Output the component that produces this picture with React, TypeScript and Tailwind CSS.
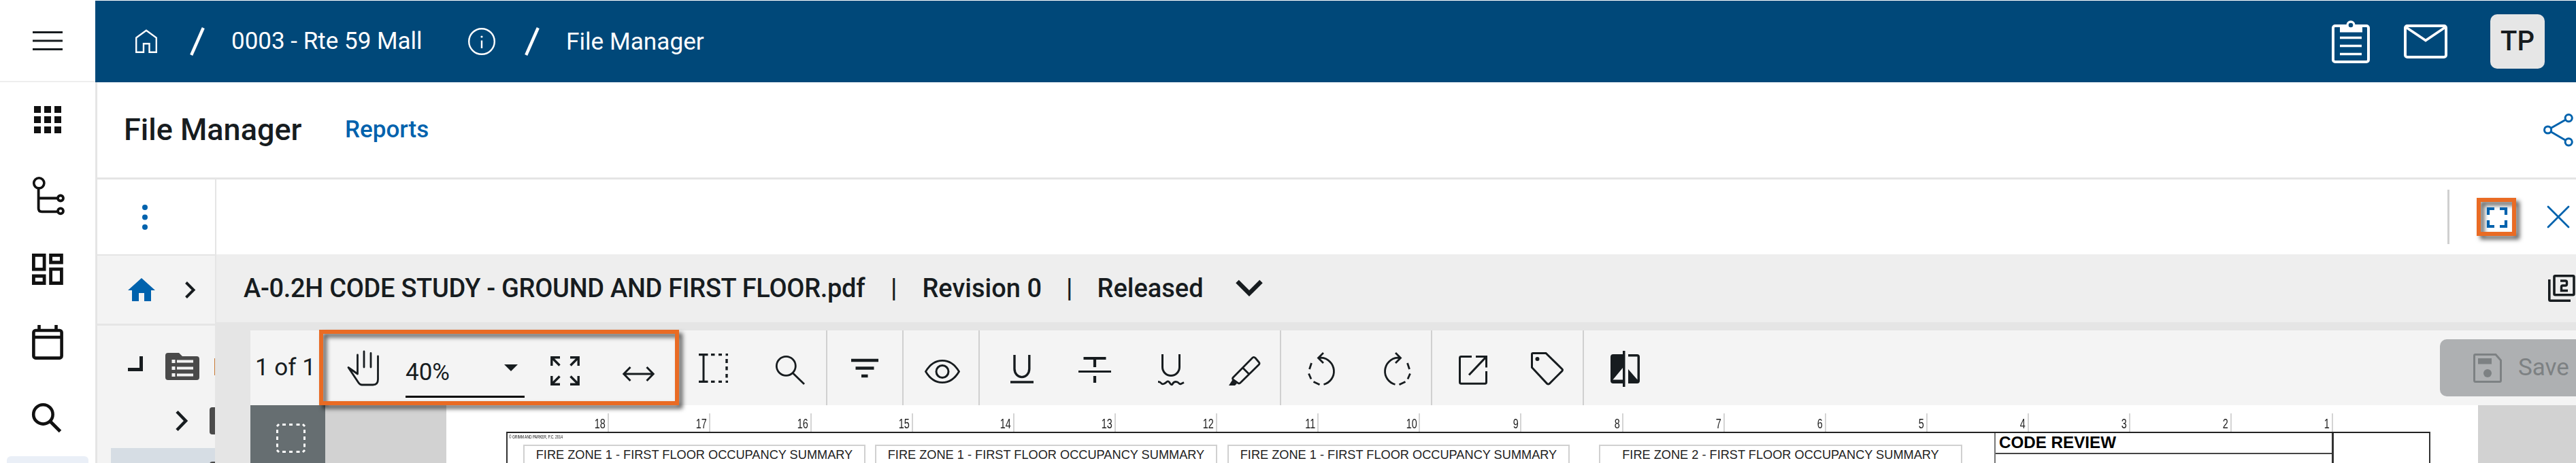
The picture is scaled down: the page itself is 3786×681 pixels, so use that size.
import React from 'react';

interface IconProps {
  w: number;
  h: number;
  className?: string;
  children: React.ReactNode;
}

const Icon: React.FC<IconProps> = ({ w, h, className = '', children }) => (
  <svg
    width={w}
    height={h}
    viewBox={`0 0 ${w} ${h}`}
    fill="none"
    stroke="currentColor"
    className={`shrink-0 overflow-visible ${className}`}
  >
    {children}
  </svg>
);

const rulerMarks = [18, 17, 16, 15, 14, 13, 12, 11, 10, 9, 8, 7, 6, 5, 4, 3, 2, 1];

const zones = [
  { title: 'FIRE ZONE 1 - FIRST FLOOR OCCUPANCY SUMMARY', className: 'ml-[23px] w-[503px]' },
  { title: 'FIRE ZONE 1 - FIRST FLOOR OCCUPANCY SUMMARY', className: 'ml-[14px] w-[503px]' },
  { title: 'FIRE ZONE 1 - FIRST FLOOR OCCUPANCY SUMMARY', className: 'ml-[15px] w-[503px]' },
  { title: 'FIRE ZONE 2 - FIRST FLOOR OCCUPANCY SUMMARY', className: 'ml-[43px] w-[534px]' },
];

const Slash: React.FC<{ className?: string }> = ({ className }) => (
  <Icon w={22} h={40} className={className}>
    <path d="M2.2 40 19.8 0" strokeWidth="4.4" />
  </Icon>
);

const Header: React.FC = () => (
  <header className="mt-px flex h-[120px] flex-1 items-center bg-[#004879] text-[35px] text-white">
    <Icon w={32} h={36} className="ml-[59px]">
      <path d="M1.2 12.5 16 1.7 30.8 12.5V33.8H20.5V21.2H12V33.8H1.2Z" strokeWidth="2.4" />
    </Icon>
    <Slash className="ml-[48px]" />
    <span className="mt-px ml-[39px] w-[279px] whitespace-nowrap">0003 - Rte 59 Mall</span>
    <Icon w={40} h={40} className="ml-[69px]">
      <circle cx="20" cy="20" r="18.8" strokeWidth="2.4" />
      <path d="M20 18.5V30" strokeWidth="2.4" />
      <circle cx="20" cy="13" r="1.6" fill="currentColor" stroke="none" />
    </Icon>
    <Slash className="ml-[43px]" />
    <span className="mt-px ml-[39px] text-[35.2px] whitespace-nowrap">File Manager</span>
    <Icon w={56} h={63} className="mr-[50px] ml-auto">
      <rect x="2" y="8" width="52" height="53" rx="3" strokeWidth="4" />
      <path d="M12 8H21.5A7 7 0 0 1 34.5 8H45V17.5H12Z" fill="currentColor" stroke="none" />
      <circle cx="28" cy="7" r="5" fill="#004879" strokeWidth="3.4" />
      <path d="M12 25.5H44M12 37.5H44M12 49.5H44" strokeWidth="3.6" />
    </Icon>
    <Icon w={64} h={50} className="mr-[63px]">
      <rect x="2" y="2" width="60" height="46" rx="3" strokeWidth="4" />
      <path d="M3 4 32 23.5 61 4" strokeWidth="3.6" />
    </Icon>
    <div className="mr-[46px] flex h-20 w-20 items-center justify-center rounded-[10px] bg-[#e6e6e6] text-[40px] font-medium text-[#171c1f]">
      TP
    </div>
  </header>
);

const Sidebar: React.FC = () => (
  <nav className="flex w-[143px] shrink-0 flex-col items-start border-r-3 border-[#e5e5e5] bg-white text-[#111]">
    <Icon w={40} h={40} className="mt-[35px] ml-[50px]">
      <path
        d="M0 0h10v10H0zM15 0h10v10H15zM30 0h10v10H30zM0 15h10v10H0zM15 15h10v10H15zM30 15h10v10H30zM0 30h10v10H0zM15 30h10v10H15zM30 30h10v10H30z"
        fill="currentColor"
        stroke="none"
      />
    </Icon>
    <Icon w={47} h={56} className="mt-[64px] ml-[48px]">
      <circle cx="9.3" cy="9.3" r="7.6" strokeWidth="3.6" />
      <path d="M8.6 17V46.5Q8.6 51.3 13.4 51.3H36M8.6 31.5H36" strokeWidth="3.8" />
      <circle cx="41" cy="31.5" r="4" strokeWidth="3.8" />
      <circle cx="41" cy="50.3" r="4" strokeWidth="3.8" />
    </Icon>
    <Icon w={46} h={46} className="mt-[57px] ml-[47px]">
      <path d="M2.4 2.4H18.1V23.1H2.4ZM27.6 2.4H43.4V13H27.6ZM27.6 22.8H43.4V43.5H27.6ZM2.4 33H18.1V43.5H2.4Z" strokeWidth="4.8" />
    </Icon>
    <Icon w={46} h={51} className="mt-[59px] ml-[47px]">
      <rect x="2.4" y="8" width="41.2" height="40.6" rx="3" strokeWidth="4.6" />
      <path d="M2.4 18H43.6M10.5 0V7M35.5 0V7" strokeWidth="4.6" />
    </Icon>
    <Icon w={44} h={44} className="mt-[64px] ml-[47px]">
      <circle cx="16.4" cy="16.4" r="14.2" strokeWidth="4.6" />
      <path d="M27 27 41.5 41.5" strokeWidth="5" />
    </Icon>
    <div className="mt-[34px] ml-[10px] h-[40px] w-[120px] shrink-0 rounded-[6px] bg-[#eaeff7]" />
  </nav>
);

const FilesPanel: React.FC = () => (
  <aside className="flex w-[175px] shrink-0 flex-col overflow-hidden border-r-2 border-[#e5e5e5] bg-[#f3f3f3] text-[#171c1f]">
    <div className="flex h-[112px] shrink-0 items-center border-b-2 border-[#e5e5e5] bg-white text-[#0062ad]">
      <Icon w={8} h={37} className="ml-[66px]">
        <circle cx="4" cy="4" r="4" fill="currentColor" stroke="none" />
        <circle cx="4" cy="18.5" r="4" fill="currentColor" stroke="none" />
        <circle cx="4" cy="33" r="4" fill="currentColor" stroke="none" />
      </Icon>
    </div>
    <div className="flex h-[103px] shrink-0 items-center border-b-3 border-[#e5e5e5]">
      <Icon w={40} h={34} className="ml-[45px] text-[#0062ad]">
        <path d="M20 0 40 18H34V34H24V22H16V34H6V18H0Z" fill="currentColor" stroke="none" />
      </Icon>
      <Icon w={15} h={25} className="ml-[44px]">
        <path d="M1.5 1.5 12.5 12.5 1.5 23.5" strokeWidth="4" />
      </Icon>
    </div>
    <div className="flex h-[120px] shrink-0 items-center">
      <Icon w={22} h={22} className="mt-[-8px] ml-[45px]">
        <path d="M19.5 0V19.5H0" strokeWidth="5" />
      </Icon>
      <Icon w={50} h={40} className="ml-[33px] text-[#4a4a4a]">
        <path d="M4 0H20L25 5H46Q50 5 50 9V36Q50 40 46 40H4Q0 40 0 36V4Q0 0 4 0Z" fill="currentColor" stroke="none" />
        <path d="M17 12.5H41M17 22.5H41M17 32.5H41" stroke="#f3f3f3" strokeWidth="4" />
        <path d="M9.5 12.5h5M9.5 22.5h5M9.5 32.5h5" stroke="#f3f3f3" strokeWidth="5" />
      </Icon>
      <div className="ml-[22px] h-[25px] w-[2px] shrink-0 bg-[#c87a35]" />
    </div>
    <div className="flex h-[60px] shrink-0">
      <Icon w={18} h={30} className="mt-[5px] ml-[115px]">
        <path d="M2 1.5 15 15 2 28.5" strokeWidth="4.6" />
      </Icon>
      <div className="ml-[32px] h-[40px] w-[50px] shrink-0 rounded-[4px] bg-[#4a4a4a]" />
    </div>
    <div className="ml-[20px] flex h-[60px] shrink-0 bg-[#d6dde4]">
      <div className="mt-[20px] ml-[145px] h-[40px] w-[50px] shrink-0 rounded-[4px] bg-[#4a4a4a]" />
    </div>
  </aside>
);

const Toolbar: React.FC = () => (
  <div className="relative flex h-[110px] shrink-0 bg-[#f4f4f4] text-[35px] text-[#171c1f]">
    <div className="flex w-[848px] shrink-0 items-center border-r-2 border-[#d0d0d0]">
      <span className="mt-px ml-[7px] w-[88px] whitespace-nowrap">1 of 1</span>
      <Icon w={47} h={51} className="ml-[47px]">
        <path
          d="M15.5 6V34L2 24.5 17 47Q19 50 22 50H38Q45.5 50 45.5 42V8M25 1V24M35 3.5V24"
          strokeWidth="2.8"
          strokeLinecap="round"
          strokeLinejoin="round"
        />
      </Icon>
      <div className="mt-[11px] ml-[39px] flex h-[77px] w-[175px] items-center border-b-3 border-black">
        <span className="mt-[7px]">40%</span>
        <Icon w={20} h={10} className="mr-[10px] mb-[8px] ml-auto">
          <path d="M0 0H20L10 10Z" fill="currentColor" stroke="none" />
        </Icon>
      </div>
      <Icon w={43} h={43} className="mt-[8px] ml-[38px]">
        <path d="M1.8 14V1.8H14M29 1.8H41.2V14M41.2 29V41.2H29M14 41.2H1.8V29M1.8 1.8 13.5 13.5M41.2 1.8 29.5 13.5M41.2 41.2 29.5 29.5M1.8 41.2 13.5 29.5" strokeWidth="3.4" />
      </Icon>
      <Icon w={47} h={22} className="mt-[18px] ml-[63px]">
        <path d="M2 11H45M11.5 1 1.8 11 11.5 21M35.5 1 45.2 11 35.5 21" strokeWidth="3" />
      </Icon>
      <Icon w={43} h={43} className="ml-[65px]">
        <path d="M7 1.6V41.4" strokeWidth="3" />
        <path d="M0 1.6H13.5M0 41.4H13.5" strokeWidth="3.4" />
        <path d="M18 1.6h5.5M29 1.6h5M39.5 1.6h3.5M18 41.4h5.5M29 41.4h5M39.5 41.4h3.5M41 8v6M41 19v5.5M41 30v5.5" strokeWidth="3.4" />
      </Icon>
      <Icon w={43} h={43} className="mt-[6px] ml-[70px]">
        <circle cx="15.3" cy="15.3" r="14" strokeWidth="2.8" />
        <path d="M25 25.5 42 42" strokeWidth="2.8" />
      </Icon>
    </div>
    <div className="flex w-[112px] shrink-0 items-center border-r-2 border-[#d0d0d0]">
      <Icon w={40} h={27} className="ml-[35px]">
        <path d="M0 2H40M6.5 13.5H33.5M15 25H24.5" strokeWidth="4.3" />
      </Icon>
    </div>
    <div className="flex w-[112px] shrink-0 items-center border-r-2 border-[#d0d0d0]">
      <Icon w={52} h={35} className="mt-[11px] ml-[31px]">
        <path d="M1.5 17.5Q11 1.4 26 1.4T50.5 17.5Q41 33.6 26 33.6T1.5 17.5Z" strokeWidth="2.8" />
        <circle cx="26" cy="17.5" r="9" strokeWidth="3" />
      </Icon>
    </div>
    <div className="flex w-[443px] shrink-0 items-center border-r-2 border-[#d0d0d0]">
      <Icon w={34} h={44} className="mt-[6px] ml-[45px]">
        <path d="M6 0V20.5A10.8 12 0 0 0 27.8 20.5V0" strokeWidth="3.4" />
        <path d="M0 40H34" strokeWidth="3.5" />
      </Icon>
      <Icon w={48} h={38} className="mt-[6px] ml-[66px]">
        <path d="M7.5 2H40.5" strokeWidth="4" />
        <path d="M24 2V15M24 28V38" strokeWidth="4.2" />
        <path d="M0 21.5H48" strokeWidth="3" />
      </Icon>
      <Icon w={38} h={46} className="mt-[6px] ml-[69px]">
        <path d="M6.5 0V19A12.5 12.5 0 0 0 31.5 19V0" strokeWidth="3" />
        <path d="M0 40.5q3 0 4.5 2t4 1 4.5-3 4.500 2 4 1 4.500-3 4.500 2 3.500 1 4-2" strokeWidth="2.8" />
      </Icon>
      <Icon w={46} h={43} className="mt-[8px] ml-[66px]">
        <path d="M6 31.5 35 2Q37 .5 39 2.5L44 8.5Q46 10.5 44 12.5L17 39Q15 41 13 39L6.5 34.5Q5 33 6 31.5ZM21 17.5 30 26.5" strokeWidth="2.8" />
        <path d="M0 43 5.5 34.5 12 40 9 43Z" fill="currentColor" stroke="none" />
      </Icon>
    </div>
    <div className="flex w-[222px] shrink-0 items-center border-r-2 border-[#d0d0d0]">
      <Icon w={42} h={49} className="mt-[3px] ml-[39px]">
        <path d="M23.5 47.5A20 20 0 0 0 20 8.2L15.5 8.5M23 1 15.5 8.5 23 16" strokeWidth="2.8" />
        <path d="M5.5 16 2.5 25M1.5 31.5 5 39.5M8.5 43.5 17.5 47.8" strokeWidth="2.8" />
      </Icon>
      <Icon w={42} h={49} className="mt-[3px] ml-[68px]">
        <path d="M18.5 47.5A20 20 0 0 1 22 8.2L26.5 8.5M19 1 26.5 8.5 19 16" strokeWidth="2.8" />
        <path d="M36.5 16 39.5 25M40.5 31.5 37 39.5M33.5 43.5 24.5 47.8" strokeWidth="2.8" />
      </Icon>
    </div>
    <div className="flex w-[223px] shrink-0 items-center border-r-2 border-[#d0d0d0]">
      <Icon w={42} h={43} className="mt-[6px] ml-[39px]">
        <path d="M19 1.6H3.5Q1.5 1.6 1.5 3.5V39Q1.5 41.3 3.5 41.3H38.5Q40.5 41.3 40.5 39V23" strokeWidth="3" />
        <path d="M25 1.6H40.5V17.5M40.5 1.6 15 28.5" strokeWidth="3" />
      </Icon>
      <Icon w={48} h={48} className="mt-[2px] ml-[64px]">
        <path d="M3 1.5H22L46 25Q47 26 46 27.5L27 46.5Q25.5 47.5 24 46.5L1.5 22.5V3Q1.5 1.5 3 1.5Z" strokeWidth="3" />
        <circle cx="9.5" cy="10" r="3" fill="currentColor" stroke="none" />
      </Icon>
    </div>
    <Icon w={43} h={53} className="mt-[30px] ml-[39px]">
      <path
        d="M4 5H18V0H21.5V53H18V48H4Q0 48 0 44V9Q0 5 4 5ZM18 25 3.5 42.5H18Z"
        fill="currentColor"
        fillRule="evenodd"
        stroke="none"
      />
      <path d="M26 5H39Q43 5 43 9V44Q43 48 39 48H26V27L39.5 42.5V8.5H26Z" fill="currentColor" stroke="none" />
    </Icon>
    <div className="mt-[13px] mr-[-20px] ml-auto flex h-[84px] w-[220px] items-center rounded-[10px] bg-[#aeb0b2] text-[#7d8183]">
      <Icon w={42} h={43} className="ml-[49px]">
        <path d="M3 1.5H33L40.5 10V39.5Q40.5 41.5 38.5 41.5H3.5Q1.5 41.5 1.5 39.5V3Q1.5 1.5 3 1.5Z" strokeWidth="3" />
        <path d="M7 7H27V15.5H7Z" fill="currentColor" stroke="none" />
        <circle cx="21" cy="29" r="6" fill="currentColor" stroke="none" />
      </Icon>
      <span className="ml-[24px]">Save</span>
    </div>
    {/* callout round the zoom controls */}
    <div className="absolute top-[-1px] left-[101px] h-[111px] w-[529px] border-6 border-[#e96b24] drop-shadow-[5px_5px_3px_rgba(0,0,0,0.65)]" />
  </div>
);

const Drawing: React.FC = () => (
  <div className="w-[2986px] shrink-0 overflow-hidden bg-white pt-[12px] font-['Liberation_Sans',sans-serif] text-[#222]">
    <div className="ml-[89.5px] flex h-[27px]">
      {rulerMarks.map((mark) => (
        <div key={mark} className="w-[149.1px] shrink-0 border-r-2 border-[#d4d4d4] pr-[3px] text-right text-[19.5px] leading-[31px]">
          <span className="inline-block origin-right scale-x-[0.74]">{mark}</span>
        </div>
      ))}
    </div>
    <div className="ml-[88px] flex h-[60px] w-[2828px] border-2 border-[#333] border-t-[#222]">
      <div className="h-[60px] w-0">
        <div className="mt-px ml-[2px] w-[90px] origin-left scale-x-[0.76] text-[6.5px] leading-[9px] whitespace-nowrap text-black">
          © GRIMM AND PARKER, P.C. 2014
        </div>
      </div>
      {zones.map((zone, i) => (
        <div key={i} className={`mt-[17px] flex h-[50px] shrink-0 justify-center border-2 border-[#d0d0d0] text-[18.2px] leading-[26px] whitespace-nowrap ${zone.className}`}>
          {zone.title}
        </div>
      ))}
      <div className="ml-[47px] h-[60px] w-[499px] shrink-0 border-r-3 border-l-2 border-r-[#333] border-l-[#777]">
        <div className="h-[31px] border-b-2 border-[#444] pl-[5px] text-[24.2px] leading-[28px] font-bold text-black">CODE REVIEW</div>
      </div>
    </div>
  </div>
);

const App: React.FC = () => {
  return (
    <div className="flex h-[681px] w-[3786px] flex-col overflow-hidden bg-white font-[Roboto,sans-serif] text-[#171c1f]">
      <div className="flex h-[121px] shrink-0">
        <div className="flex w-[140px] shrink-0 items-center justify-center border-b-2 border-[#eee]">
          <Icon w={44} h={28}>
            <path d="M0 1.5H44M0 14H44M0 26.5H44" strokeWidth="3" />
          </Icon>
        </div>
        <Header />
      </div>
      <div className="flex min-h-0 flex-1">
        <Sidebar />
        <div className="flex min-w-0 flex-1 flex-col">
          <div className="flex h-[143px] shrink-0 items-center border-b-3 border-[#e5e5e5]">
            <h1 className="ml-[39px] w-[262px] text-[45px] font-medium whitespace-nowrap">File Manager</h1>
            <a className="ml-[63px] text-[35px] font-medium text-[#0062ad]">Reports</a>
            <Icon w={44} h={48} className="mr-[4px] ml-auto text-[#0062ad]">
              <circle cx="6.6" cy="24" r="5.1" strokeWidth="3" />
              <circle cx="37.2" cy="6.6" r="5.1" strokeWidth="3" />
              <circle cx="37.2" cy="41.8" r="5.1" strokeWidth="3" />
              <path d="M11 21.5 32.5 9.2M11 26.7 32.5 39.2" strokeWidth="3" />
            </Icon>
          </div>
          <div className="flex min-h-0 flex-1">
            <FilesPanel />
            <main className="flex min-w-0 flex-1 flex-col bg-[#e5e5e5]">
              <div className="flex h-[110px] shrink-0 items-center justify-end bg-white text-[#0062ad]">
                <div className="mr-[40px] h-[80px] w-[3px] bg-[#d0d0d0]" />
                <div className="relative mr-[46px] flex h-[56px] w-[58px] items-center justify-center">
                  {/* callout round the full screen button */}
                  <div className="absolute inset-0 border-6 border-[#e96b24] drop-shadow-[5px_5px_3px_rgba(0,0,0,0.65)]" />
                  <Icon w={30} h={30} className="relative mt-[2px] ml-[2px]">
                    <path d="M2 11V2H11M19 2H28V11M28 19V28H19M11 28H2V19" strokeWidth="4.2" />
                  </Icon>
                </div>
                <Icon w={32} h={32} className="mr-[10px]">
                  <path d="M1 1 31 31M31 1 1 31" strokeWidth="2.8" strokeLinecap="round" />
                </Icon>
              </div>
              <div className="flex h-[100px] shrink-0 items-center bg-[#eee] text-[38px] font-medium whitespace-nowrap">
                <span className="ml-[40px] w-[915px] tracking-[-0.3px]">A-0.2H CODE STUDY - GROUND AND FIRST FLOOR.pdf</span>
                <span className="ml-[36px]">|</span>
                <span className="ml-[37px]">Revision 0</span>
                <span className="ml-[36px]">|</span>
                <span className="ml-[36px]">Released</span>
                <Icon w={40} h={24} className="ml-[47px]">
                  <path d="M2.5 2 20 19.5 37.5 2" strokeWidth="6.4" />
                </Icon>
                <Icon w={40} h={40} className="mr-px ml-auto">
                  <rect x="9" y="1.8" width="29" height="28" rx="1.5" strokeWidth="3.6" />
                  <path d="M1.8 7V36.5Q1.8 38.2 3.5 38.2H33" strokeWidth="3.6" />
                  <path d="M18 9H25.5Q27.5 9 27.5 11V14Q27.5 16 25.5 16H21.5Q19.5 16 19.5 18V23.5H29" strokeWidth="3.4" />
                </Icon>
              </div>
              <div className="mt-[12px] ml-[50px] flex min-h-0 flex-1 flex-col">
                <Toolbar />
                <div className="flex min-h-0 flex-1 bg-[#d2d2d2]">
                  <div className="mr-[178px] w-[110px] shrink-0 bg-[#666e71]">
                    <Icon w={43} h={43} className="mt-[27px] ml-[38px] text-white">
                      <path d="M9 1.5h5M19 1.5h5M29.5 1.5h5M9 41.5h5M19 41.5h5M29.5 41.5h5M1.5 9v5M1.5 19v5M1.5 29.5v5M41.5 9v5M41.5 19v5M41.5 29.5v5M1 4 4 1M39 1 42 4M1 39 4 42M39 42 42 39" strokeWidth="3" />
                    </Icon>
                  </div>
                  <Drawing />
                </div>
              </div>
            </main>
          </div>
        </div>
      </div>
    </div>
  );
};

export default App;
